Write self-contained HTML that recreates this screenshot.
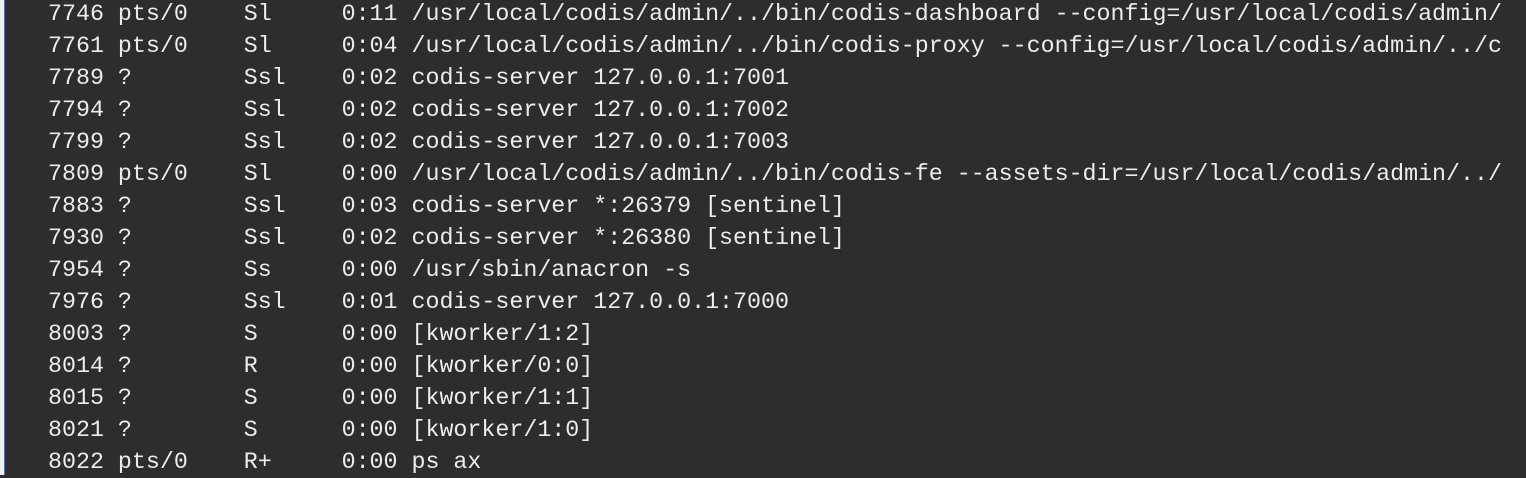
<!DOCTYPE html>
<html><head><style>
html,body{margin:0;padding:0;background:#2d2d2d;width:1526px;height:475px;overflow:hidden}
.l{position:absolute;left:0;top:0;width:4px;height:475px;background:#f0f0f0}
.b{position:absolute;left:4px;top:0;width:1px;height:475px;background:#2a7fd4}
pre{position:absolute;left:48px;top:-2px;margin:0;font-family:"Liberation Mono",monospace;font-size:23.3px;line-height:32px;color:#ececec;white-space:pre}
</style></head><body>
<div class="l"></div><div class="b"></div>
<pre>7746 pts/0    Sl     0:11 /usr/local/codis/admin/../bin/codis-dashboard --config=/usr/local/codis/admin/
7761 pts/0    Sl     0:04 /usr/local/codis/admin/../bin/codis-proxy --config=/usr/local/codis/admin/../c
7789 ?        Ssl    0:02 codis-server 127.0.0.1:7001
7794 ?        Ssl    0:02 codis-server 127.0.0.1:7002
7799 ?        Ssl    0:02 codis-server 127.0.0.1:7003
7809 pts/0    Sl     0:00 /usr/local/codis/admin/../bin/codis-fe --assets-dir=/usr/local/codis/admin/../
7883 ?        Ssl    0:03 codis-server *:26379 [sentinel]
7930 ?        Ssl    0:02 codis-server *:26380 [sentinel]
7954 ?        Ss     0:00 /usr/sbin/anacron -s
7976 ?        Ssl    0:01 codis-server 127.0.0.1:7000
8003 ?        S      0:00 [kworker/1:2]
8014 ?        R      0:00 [kworker/0:0]
8015 ?        S      0:00 [kworker/1:1]
8021 ?        S      0:00 [kworker/1:0]
8022 pts/0    R+     0:00 ps ax</pre>
</body></html>
